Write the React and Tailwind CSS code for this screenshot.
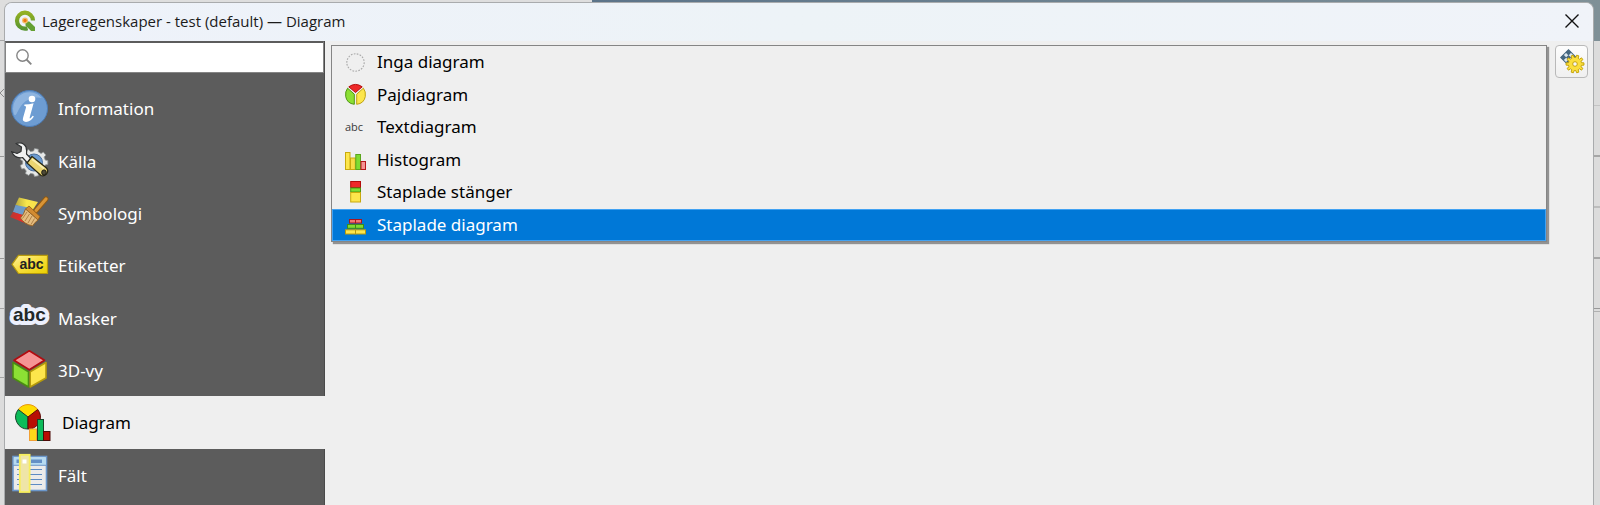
import React, { useState } from "react";

const gearPath = (cx, cy, inner, outer, teeth) => {
  const step = (Math.PI * 2) / teeth;
  const points = [];
  for (let i = 0; i < teeth; i++) {
    const a = i * step;
    [
      [inner, -0.3],
      [outer, -0.2],
      [outer, 0.2],
      [inner, 0.3],
    ].forEach(([r, k]) => {
      points.push(
        `${(cx + r * Math.cos(a + k * step)).toFixed(2)},${(cy + r * Math.sin(a + k * step)).toFixed(2)}`
      );
    });
  }
  return `M${points.join("L")}Z`;
};

const LargeIcon = ({ children }) => (
  <svg viewBox="0 0 37 37" className="h-[37px] w-[37px] shrink-0 overflow-visible" aria-hidden="true">
    {children}
  </svg>
);

const SmallIcon = ({ children }) => (
  <svg viewBox="0 0 21 21" className="h-[21px] w-[21px] shrink-0 overflow-visible" aria-hidden="true">
    {children}
  </svg>
);

const LogoIcon = () => (
  <svg viewBox="0 0 22 22" className="h-[22px] w-[22px] shrink-0" aria-hidden="true">
    <defs>
      <linearGradient id="logoRing" x1="0" y1="0" x2="0" y2="1">
        <stop offset="0" stopColor="#93b023" />
        <stop offset="1" stopColor="#589632" />
      </linearGradient>
    </defs>
    <path
      d="M19 10.5A8 8 0 1 0 11 18.700Q12.300 18.700 13.500 18.300"
      fill="none"
      stroke="url(#logoRing)"
      strokeWidth="4.200"
    />
    <path d="M11.500 11.500H15.300L21 17V21H17.200L11.500 15.500Z" fill="#64a032" />
    <circle cx="11" cy="10.500" r="3" fill="#f3c06a" />
    <circle cx="11" cy="10.500" r="1.700" fill="#ee7913" />
  </svg>
);

const InfoIcon = () => (
  <LargeIcon>
    <circle cx="18.5" cy="18.500" r="18" fill="#6d9cd2" stroke="#4c7db8" />
    <path d="M2 19A16.500 16.500 0 0 1 31 8Q14 5 6 23Q3 29 2 19Z" fill="#9dbfe4" opacity="0.7" />
    <circle cx="21" cy="9" r="3.300" fill="#fff" />
    <path
      d="M13.500 14.500Q18 14.500 22.600 13.200L18.800 27Q18.300 29 19.400 28.300Q20.500 27.500 21.600 25.800L22.900 26.500Q19.500 31.900 15 31.900Q11 31.700 12 28L15 17.600Q15.400 15.900 13.200 15.800Z"
      fill="#fff"
    />
  </LargeIcon>
);

const SourceIcon = () => (
  <LargeIcon>
    <path d={gearPath(23, 20.5, 11.5, 14, 9)} fill="#e6e8e8" stroke="#8e9292" strokeWidth="0.8" />
    <circle cx="23" cy="20.500" r="8.500" fill="#6b9bd0" stroke="#496e9b" />
    <path
      d="M5 1.500Q12-1 15 5Q16 9 15.500 12L20 16.500L16.500 21L11.500 15.500Q4 17 0.500 9.500L6 11.500L10 9.500L10.500 5Z"
      fill="#f0f1f1"
      stroke="#303233"
      strokeWidth="1.200"
      strokeLinejoin="round"
    />
    <path
      d="M21 14.500L35.500 26Q38 29 35.500 32Q33 34.700 30 33.500L16 21Z"
      fill="#ead570"
      stroke="#2b2915"
      strokeWidth="1.300"
    />
    <path d="M21 17L33 26.500" stroke="#f9eeae" strokeWidth="1.800" />
    <ellipse cx="33" cy="30.500" rx="2.300" ry="2.600" fill="#4e4a35" stroke="#1c1b12" />
  </LargeIcon>
);

const SymbologyIcon = () => (
  <LargeIcon>
    <defs>
      <linearGradient id="yellowBand" x1="0" x2="1">
        <stop offset="0" stopColor="#b7a940" />
        <stop offset="0.5" stopColor="#f9e74b" />
        <stop offset="1" stopColor="#f9e04b" />
      </linearGradient>
      <linearGradient id="redBand" x1="0" x2="1">
        <stop offset="0" stopColor="#b43b33" />
        <stop offset="0.6" stopColor="#ef2626" />
      </linearGradient>
    </defs>
    <path d="M8 3.500L27 8L21 17L4.500 11Z" fill="url(#yellowBand)" />
    <path d="M4.500 11L20 14L14 22L2 18Z" fill="#6e9ac8" />
    <path d="M2 18L12 21L20 31.500L-1 23Z" fill="url(#redBand)" />
    <path d="M35 5L25 16.500" stroke="#8f5a14" strokeWidth="5" strokeLinecap="round" />
    <path d="M35 5L25 16.500" stroke="#d99436" strokeWidth="3.200" strokeLinecap="round" />
    <path d="M18 12L29 22.500L27 26L14.500 15Z" fill="#d28b31" stroke="#8f5a14" strokeWidth="0.8" />
    <path d="M14.500 15L27 26Q24 28 21.500 32Q13 30 9.500 24Q13 20 14.500 15Z" fill="#e5bd7f" stroke="#976427" />
    <path
      d="M16 18L11.500 24.500M18.500 20L14 27M21 22L17 29M23.500 24.500L20 30.500"
      stroke="#ac7940"
      strokeWidth="0.9"
    />
  </LargeIcon>
);

const LabelIcon = () => (
  <LargeIcon>
    <defs>
      <linearGradient id="tagFill" x1="0" y1="0" x2="1" y2="1">
        <stop offset="0" stopColor="#fff3a0" />
        <stop offset="0.5" stopColor="#f7de3e" />
        <stop offset="1" stopColor="#ead000" />
      </linearGradient>
    </defs>
    <path d="M1 17.300L7.500 8.300H36.500V26.500H7.500Z" fill="url(#tagFill)" stroke="#b89b0c" strokeWidth="1.200" />
    <text x="8.500" y="21.500" className="fill-[#222222] font-['Liberation_Sans'] text-[14px] font-bold">
      abc
    </text>
  </LargeIcon>
);

const MaskIcon = () => (
  <LargeIcon>
    <text
      x="2"
      y="22"
      stroke="#edf0fd"
      strokeWidth="8"
      strokeLinejoin="round"
      paintOrder="stroke"
      className="fill-[#232829] font-['Liberation_Sans'] text-[19px] font-bold"
    >
      abc
    </text>
  </LargeIcon>
);

const CubeIcon = () => (
  <LargeIcon>
    <g strokeWidth="1.600" strokeLinejoin="round">
      <path d="M2 10.500L17.500 19.700V35L2 26Z" fill="#8ce034" stroke="#4b8c13" />
      <path d="M35 10.500L19.200 19.700V35L35 26Z" fill="#fde64c" stroke="#b59a0b" />
      <path d="M18.300-1.300L33.500 8.300L18.300 17.700L3 8.300Z" fill="#f69494" stroke="#b10c10" />
    </g>
  </LargeIcon>
);

const DiagramIcon = () => (
  <LargeIcon>
    <path d="M13 13L3.300 5.500A12 12 0 0 1 22.700 5.500Z" fill="#ffdc00" stroke="#e9960f" />
    <path d="M13 13L3.300 5.500A12 12 0 0 0 13 25Z" fill="#0cbb5a" stroke="#17432a" />
    <path d="M13 13L22.700 5.500A12 12 0 0 1 13 25Z" fill="#b80d04" stroke="#5a0b06" />
    <rect x="14.500" y="25" width="7" height="11.500" fill="#ffd91a" stroke="#f1a032" />
    <rect x="22.500" y="15.500" width="6" height="21" fill="#0cbb5a" stroke="#17432a" />
    <rect x="28.500" y="27.500" width="6.500" height="9" fill="#b80d04" stroke="#4d0b07" />
  </LargeIcon>
);

const FieldsIcon = () => (
  <LargeIcon>
    <rect x="2" y="0.500" width="33.500" height="34" fill="#ecebea" stroke="#6b97cb" strokeWidth="1.600" />
    <rect x="2.800" y="1.300" width="32" height="7.700" fill="#b6dbf2" />
    <path d="M2 9.300H35.500" stroke="#6b97cb" />
    <path d="M5.500 5.300H8M20 5.300H31" stroke="#6490c6" strokeWidth="3.500" />
    <path
      d="M6 13.500H8M19 13.500H31M6 18.500H8M19 18.500H31M6 23.500H8M19 23.500H31M6 28.500H8M19 28.500H31"
      stroke="#5d8bc3"
      strokeWidth="1.200"
    />
    <rect x="8.800" y="-1.200" width="9.800" height="37.200" fill="#efe5a8" stroke="#f7ee5c" strokeWidth="1.800" />
    <rect x="11.500" y="3.500" width="4" height="4" fill="#fff" />
  </LargeIcon>
);

const NoDiagramIcon = () => (
  <SmallIcon>
    <circle cx="10.500" cy="10.500" r="8.700" fill="none" stroke="#a9a9a9" strokeWidth="1.100" strokeDasharray="1.700 1.300" />
  </SmallIcon>
);

const PieIcon = () => (
  <SmallIcon>
    <path d="M10.500 8.500L3.800 2.800Q10.500-2 17.200 2.800Z" fill="#ee2929" stroke="#b50b0b" />
    <path d="M2.600 4.200L9.300 10.200V20.300Q2 19.500 0.700 12.500Q0 7.500 2.600 4.200Z" fill="#8ce034" stroke="#4f9613" />
    <path d="M18.400 4.200L11.700 10.200V20.300Q19 19.500 20.300 12.500Q21 7.500 18.400 4.200Z" fill="#fde64c" stroke="#bfa312" />
  </SmallIcon>
);

const TextIcon = () => (
  <SmallIcon>
    <text x="0" y="14" className="fill-[#3a3a3a] font-['Open_Sans'] text-[11px]">
      abc
    </text>
  </SmallIcon>
);

const HistogramIcon = () => (
  <SmallIcon>
    <rect x="0.500" y="3.500" width="4.500" height="17" fill="#fde64c" stroke="#c9a90d" />
    <rect x="5.500" y="9" width="4.800" height="11.500" fill="#f6dc47" stroke="#c9a90d" />
    <rect x="10.800" y="5.500" width="4.700" height="15" fill="#7edc32" stroke="#5aa51c" />
    <rect x="16" y="12.500" width="4.500" height="8" fill="#f69494" stroke="#b7171b" />
  </SmallIcon>
);

const StackedBarsIcon = () => (
  <SmallIcon>
    <rect x="5.700" y="-0.500" width="9.800" height="6" fill="#ef2929" stroke="#b50b0b" />
    <rect x="5.700" y="6" width="9.800" height="4" fill="#7edc32" stroke="#4f9613" />
    <rect x="5.700" y="10.500" width="9.800" height="9.500" fill="#fde64c" stroke="#c9a90d" />
  </SmallIcon>
);

const StackedDiagramIcon = () => (
  <SmallIcon>
    <g fill="#f07575" stroke="#a8161e">
      <rect x="4.500" y="5.500" width="6" height="3.500" />
      <rect x="10.500" y="5.500" width="6" height="3.500" />
    </g>
    <g fill="#7edc32" stroke="#3d8b18">
      <rect x="2.500" y="10.500" width="8" height="3.800" />
      <rect x="10.500" y="10.500" width="8" height="3.800" />
    </g>
    <g fill="#fde64c" stroke="#b89b0c">
      <rect x="0.500" y="15.800" width="10" height="4.200" />
      <rect x="10.500" y="15.800" width="10" height="4.200" />
    </g>
  </SmallIcon>
);

const SettingsIcon = () => (
  <svg viewBox="0 0 31 31" className="h-[31px] w-[31px]" aria-hidden="true">
    <g transform="translate(12.500 11.500) rotate(45)">
      <rect x="-5.500" y="-5.500" width="11" height="11" fill="#dce7ef" />
      <g fill="#46677f">
        <rect x="-5.500" y="-5.500" width="4" height="4" />
        <rect x="1.500" y="-5.500" width="4" height="4" />
        <rect x="-1.800" y="-1.800" width="3.600" height="3.600" />
        <rect x="-5.500" y="1.500" width="4" height="4" />
        <rect x="1.500" y="1.500" width="4" height="4" />
      </g>
      <rect x="-5.500" y="-5.500" width="11" height="11" fill="none" stroke="#46677f" />
    </g>
    <path d={gearPath(19, 18, 6.6, 9, 10)} fill="#fbdf3d" stroke="#c6a50c" strokeLinejoin="round" />
    <circle cx="19" cy="18" r="2.300" fill="#f7f7f7" stroke="#c6a50c" />
  </svg>
);

const pages = [
  { name: "Information", icon: <InfoIcon /> },
  { name: "Källa", icon: <SourceIcon /> },
  { name: "Symbologi", icon: <SymbologyIcon /> },
  { name: "Etiketter", icon: <LabelIcon /> },
  { name: "Masker", icon: <MaskIcon /> },
  { name: "3D-vy", icon: <CubeIcon /> },
  { name: "Diagram", icon: <DiagramIcon /> },
  { name: "Fält", icon: <FieldsIcon /> },
];

const diagramTypes = [
  { name: "Inga diagram", icon: <NoDiagramIcon /> },
  { name: "Pajdiagram", icon: <PieIcon /> },
  { name: "Textdiagram", icon: <TextIcon /> },
  { name: "Histogram", icon: <HistogramIcon /> },
  { name: "Staplade stänger", icon: <StackedBarsIcon /> },
  { name: "Staplade diagram", icon: <StackedDiagramIcon /> },
];

// The window lying behind the dialog, seen only along its edges
const Backdrop = () => (
  <div className="absolute inset-0 flex flex-col bg-[#dcdcdc]" aria-hidden="true">
    <div className="flex h-[41px] shrink-0">
      <div className="w-[37%] border-b border-[#a5a5a5] bg-[#dedede]" />
      <div className="flex-1 bg-linear-to-r from-[#5c7489] to-[#7f9097]" />
    </div>
    <div className="flex flex-1 justify-between">
      <div className="w-1">
        <div className="flex h-[116px] items-center border-b border-[#999999]">
          <svg viewBox="0 0 4 10" className="mb-3 h-2.5 w-1" fill="none" stroke="#8a8a8a">
            <path d="M4 1L0 5L4 9" />
          </svg>
        </div>
        <div className="h-[102px] border-b border-[#999999]" />
        <div className="h-[50px] border-b border-[#a5a5a5]" />
        <div className="h-[69px] border-b border-[#a5a5a5]" />
      </div>
      <div className="w-2">
        <div className="h-[65px] border-b border-[#c4c4c4]" />
        <div className="h-[51px] border-b-2 border-[#a6a6a6]" />
        <div className="h-[51px] border-b-2 border-[#bdbdbd]" />
        <div className="h-[51px] border-b-2 border-[#a6a6a6]" />
        <div className="h-[50px] border-b border-[#999999]" />
        <div className="h-[3px] border-b border-[#b0b0b0]" />
      </div>
    </div>
  </div>
);

const App = () => {
  const [page, setPage] = useState("Diagram");
  const [diagramType, setDiagramType] = useState("Staplade diagram");
  const [search, setSearch] = useState("");

  return (
    <div className="relative flex min-h-screen flex-col pt-0.5 pr-[6px] pl-1 font-['Noto_Sans',sans-serif] text-[17px] leading-6">
      <Backdrop />

      <div className="relative flex flex-1 flex-col overflow-hidden rounded-t-lg border border-b-0 border-[#a9abad] bg-[#efefef]">
        {/* Title bar */}
        <header className="flex h-[38px] shrink-0 items-center justify-between bg-linear-to-r from-[#eef2fa] via-[#edf3f7] to-[#f0f3f9] pr-3.5 pb-0.5 pl-[9px]">
          <div className="flex items-center gap-1.5">
            <LogoIcon />
            <h1 className="font-['Open_Sans',sans-serif] text-[15px] text-[#1b1b1b]">
              Lageregenskaper - test (default) — Diagram
            </h1>
          </div>
          <button type="button" aria-label="Stäng">
            <svg viewBox="0 0 14 14" className="h-3.5 w-3.5" fill="none" stroke="#111" strokeWidth="1.400">
              <path d="M0.500 0.500L13.500 13.500M13.500 0.500L0.500 13.500" />
            </svg>
          </button>
        </header>

        <div className="flex flex-1">
          {/* Sidebar */}
          <aside className="flex w-80 shrink-0 flex-col border-r border-[#4a4a4a]">
            <label className="flex h-8 shrink-0 items-center border border-t-2 border-[#858585] border-t-[#5c5c5c] bg-white pb-0.5 pl-2.5">
              <svg viewBox="0 0 16 16" className="h-4 w-4 shrink-0" fill="none" stroke="#858585" strokeWidth="1.400" aria-hidden="true">
                <circle cx="6.500" cy="6.500" r="5.700" />
                <path d="M10.500 10.500L15.300 15.300" strokeWidth="1.800" />
              </svg>
              <input
                type="text"
                aria-label="Sök"
                value={search}
                onChange={(e) => setSearch(e.target.value)}
                className="min-w-0 flex-1 px-2 outline-none"
              />
            </label>
            <nav className="flex flex-1 flex-col bg-[#5c5c5c] pt-[9px] pb-1">
              {pages.map((item) => (
                <button
                  key={item.name}
                  type="button"
                  onClick={() => setPage(item.name)}
                  className={`flex min-h-12 flex-1 items-center gap-2.5 text-left ${
                    page === item.name ? "-mr-px bg-[#efefef] pl-2.5 text-black" : "pl-1.5 text-white"
                  }`}
                >
                  {item.icon}
                  <span className="pt-0.5">{item.name}</span>
                </button>
              ))}
            </nav>
          </aside>

          {/* Diagram type drop-down and the settings button beside it */}
          <main className="flex flex-1 items-start gap-2 pt-1 pr-[5px] pl-1.5">
            <div
              role="listbox"
              aria-label="Diagram"
              className="flex min-h-[197px] flex-1 flex-col border border-[#858585] bg-[#efefef] shadow-[2px_2px_1px_#929292]"
            >
              {diagramTypes.map((item) => (
                <button
                  key={item.name}
                  type="button"
                  role="option"
                  aria-selected={diagramType === item.name}
                  onClick={() => setDiagramType(item.name)}
                  className={`flex w-full flex-1 items-center gap-[11px] border pl-3 text-left ${
                    diagramType === item.name
                      ? "border-[#42a2f2] bg-[#0078d7] text-white"
                      : "border-transparent text-black"
                  }`}
                >
                  {item.icon}
                  {item.name}
                </button>
              ))}
            </div>
            <button
              type="button"
              aria-label="Inställningar"
              className="flex h-[33px] w-[33px] items-center justify-center rounded-sm border border-[#b9b9b9] bg-linear-to-b from-[#fdfdfd] to-[#f0f0f0]"
            >
              <SettingsIcon />
            </button>
          </main>
        </div>
      </div>
    </div>
  );
};

export default App;
